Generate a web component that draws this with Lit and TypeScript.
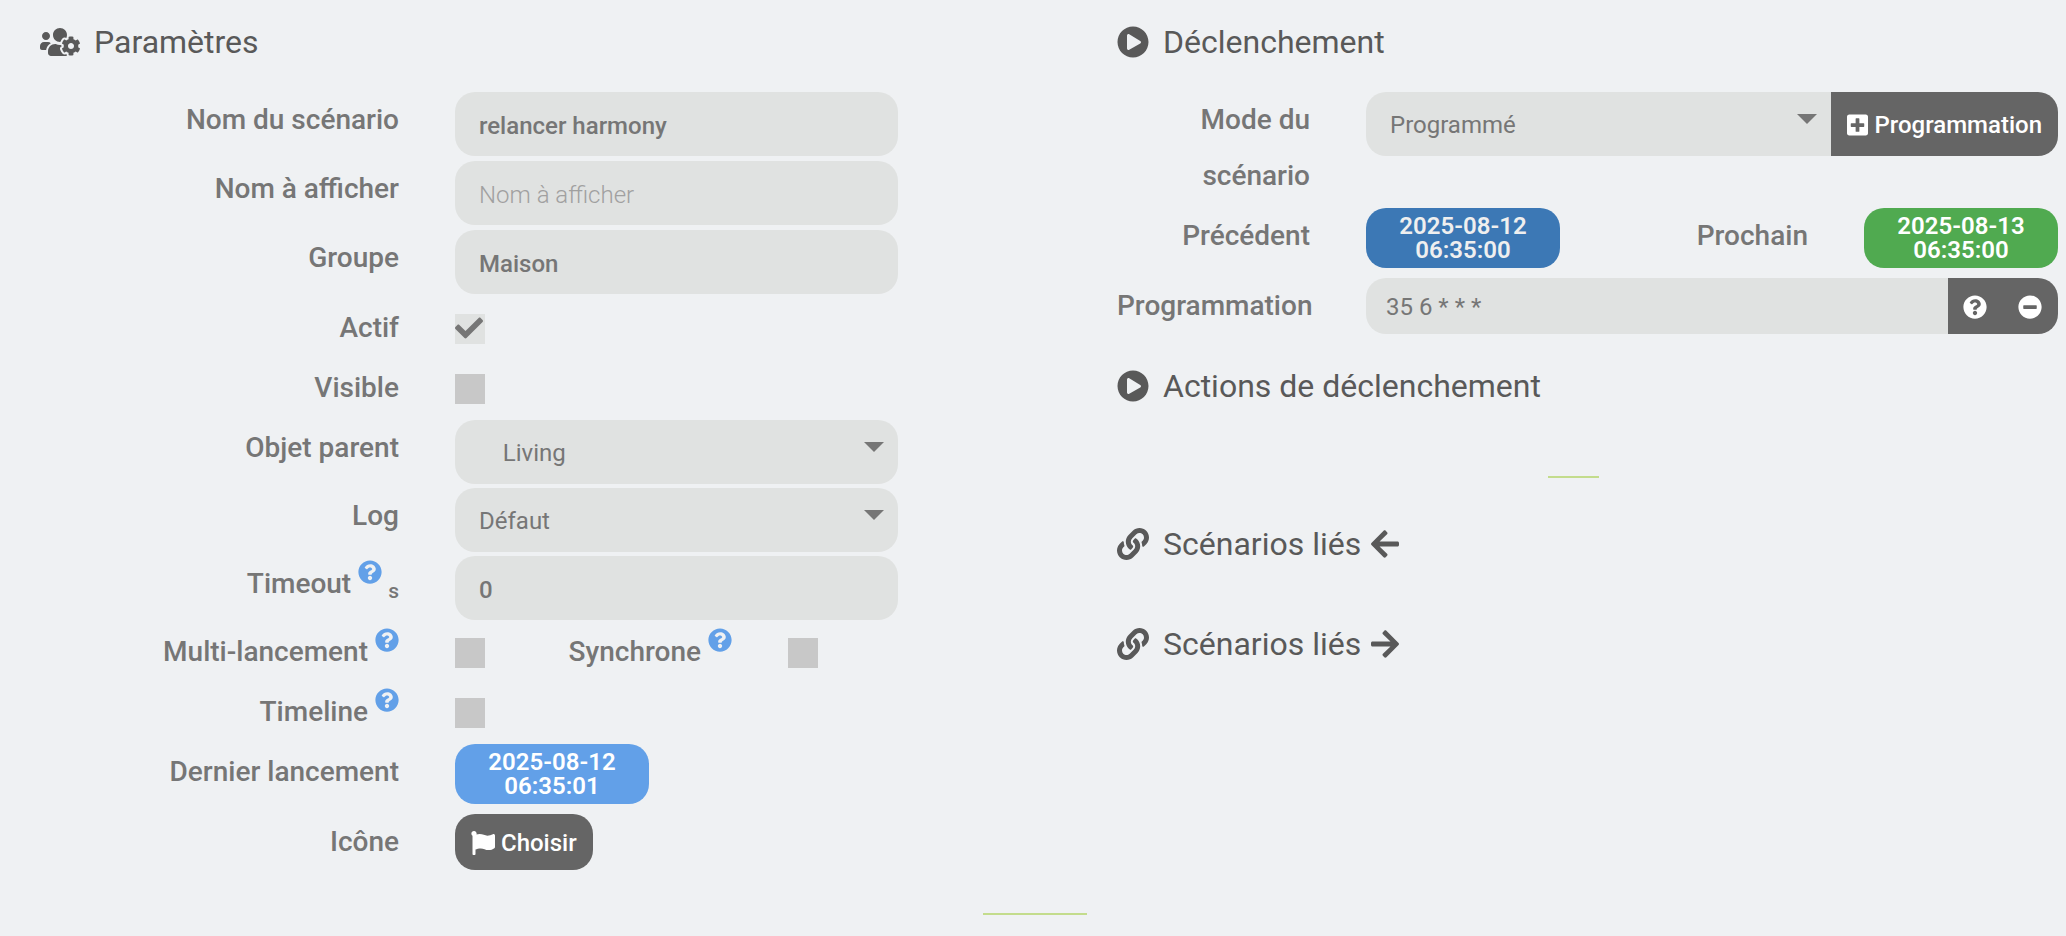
import { LitElement, html, css, svg, nothing } from "lit";
import { customElement } from "lit/decorators.js";

interface Glyph {
  w: number;
  d: string;
}

const glyphs: Record<string, Glyph> = {
  usersCog: {
    w: 640,
    d: "M610.5 341.3c2.6-14.1 2.6-28.5 0-42.6l25.8-14.9c3-1.7 4.3-5.2 3.3-8.5-6.7-21.6-18.2-41.2-33.2-57.4-2.3-2.5-6-3.1-9-1.4l-25.8 14.9c-10.9-9.3-23.4-16.5-36.9-21.3v-29.8c0-3.4-2.4-6.4-5.7-7.1-22.3-5-45-4.8-66.2 0-3.3.7-5.7 3.7-5.7 7.1v29.8c-13.5 4.8-26 12-36.9 21.3l-25.8-14.9c-2.9-1.7-6.7-1.1-9 1.4-15 16.2-26.5 35.8-33.2 57.4-1 3.3.4 6.8 3.3 8.5l25.8 14.9c-2.6 14.1-2.6 28.5 0 42.6l-25.8 14.9c-3 1.7-4.3 5.2-3.3 8.5 6.7 21.6 18.2 41.1 33.2 57.4 2.3 2.5 6 3.1 9 1.4l25.8-14.9c10.9 9.3 23.4 16.5 36.9 21.3v29.8c0 3.4 2.4 6.4 5.7 7.1 22.3 5 45 4.8 66.2 0 3.3-.7 5.7-3.7 5.7-7.1v-29.8c13.5-4.8 26-12 36.9-21.3l25.8 14.9c2.9 1.7 6.7 1.1 9-1.4 15-16.2 26.5-35.8 33.2-57.4 1-3.3-.4-6.8-3.3-8.5l-25.8-14.9zM496 368.5c-26.8 0-48.5-21.8-48.5-48.5s21.8-48.5 48.5-48.5 48.5 21.8 48.5 48.5-21.7 48.5-48.5 48.5zM96 224c35.3 0 64-28.7 64-64s-28.7-64-64-64-64 28.7-64 64 28.7 64 64 64zm224 32c1.9 0 3.7-.5 5.6-.6 8.3-21.7 20.5-42.1 36.3-59.2 7.4-8 17.9-12.6 28.9-12.6 6.9 0 13.7 1.8 19.6 5.3l7.9 4.6c.8-.5 1.6-.9 2.4-1.4 7-14.6 11.2-30.8 11.2-48 0-61.9-50.1-112-112-112S208 82.1 208 144c0 61.9 50.1 112 112 112zm105.2 194.5c-2.3-1.2-4.6-2.6-6.8-3.9-8.2 4.8-15.3 9.8-27.5 9.8-10.9 0-21.4-4.6-28.9-12.6-18.3-19.8-32.3-43.9-40.2-69.6-10.7-34.5 24.9-49.7 25.8-50.3-.1-2.6-.1-5.2 0-7.8l-7.9-4.6c-3.8-2.2-7-5-9.8-8.1-3.3.2-6.5.6-9.8.6-24.6 0-47.6-6-68.5-16h-8.3C179.6 288 128 339.6 128 403.2V432c0 26.5 21.5 48 48 48h255.4c-3.7-6-6.2-12.8-6.2-20.3v-9.2zM173.1 274.6C161.5 263.1 145.6 256 128 256H64c-35.3 0-64 28.7-64 64v32c0 17.7 14.3 32 32 32h65.9c6.3-47.4 34.9-87.3 75.2-109.4z",
  },
  play: {
    w: 512,
    d: "M256 8C119 8 8 119 8 256s111 248 248 248 248-111 248-248S393 8 256 8zm115.7 272l-176 101c-15.8 8.8-35.7-2.5-35.7-21V152c0-18.4 19.8-29.8 35.7-21l176 107c16.4 9.2 16.4 32.9 0 42z",
  },
  link: {
    w: 512,
    d: "M326.612 185.391c59.747 59.809 58.927 155.698.36 214.59-.11.12-.24.25-.36.37l-67.2 67.2c-59.27 59.27-155.699 59.262-214.96 0-59.27-59.26-59.27-155.7 0-214.96l37.106-37.106c9.84-9.84 26.786-3.3 27.294 10.606.648 17.722 3.826 35.527 9.69 52.721 1.986 5.822.567 12.262-3.783 16.612l-13.087 13.087c-28.026 28.026-28.905 73.66-1.155 101.96 28.024 28.579 74.086 28.749 102.325.51l67.2-67.19c28.191-28.191 28.073-73.757 0-101.83-3.701-3.694-7.429-6.564-10.341-8.569a16.037 16.037 0 0 1-6.947-12.606c-.396-10.567 3.348-21.456 11.698-29.806l21.054-21.055c5.521-5.521 14.182-6.199 20.584-1.731a152.482 152.482 0 0 1 20.522 17.197zM467.547 44.449c-59.261-59.262-155.69-59.27-214.96 0l-67.2 67.2c-.12.12-.25.25-.36.37-58.566 58.892-59.387 154.781.36 214.59a152.454 152.454 0 0 0 20.521 17.196c6.402 4.468 15.064 3.789 20.584-1.731l21.054-21.055c8.35-8.35 12.094-19.239 11.698-29.806a16.037 16.037 0 0 0-6.947-12.606c-2.912-2.005-6.64-4.875-10.341-8.569-28.073-28.073-28.191-73.639 0-101.83l67.2-67.19c28.239-28.239 74.3-28.069 102.325.51 27.75 28.3 26.872 73.934-1.155 101.96l-13.087 13.087c-4.35 4.35-5.769 10.79-3.783 16.612 5.864 17.194 9.042 34.999 9.69 52.721.509 13.906 17.454 20.446 27.294 10.606l37.106-37.106c59.271-59.259 59.271-155.699.001-214.959z",
  },
  arrowLeft: {
    w: 448,
    d: "M257.5 445.1l-22.2 22.2c-9.4 9.4-24.6 9.4-33.9 0L7 273c-9.4-9.4-9.4-24.6 0-33.9L201.4 44.7c9.4-9.4 24.6-9.4 33.9 0l22.2 22.2c9.5 9.5 9.3 25-.4 34.3L136.6 216H424c13.3 0 24 10.7 24 24v32c0 13.3-10.7 24-24 24H136.6l120.5 114.8c9.8 9.3 10 24.8.4 34.3z",
  },
  arrowRight: {
    w: 448,
    d: "M190.5 66.9l22.2-22.2c9.4-9.4 24.6-9.4 33.9 0L441 239c9.4 9.4 9.4 24.6 0 33.9L246.6 467.3c-9.4 9.4-24.6 9.4-33.9 0l-22.2-22.2c-9.5-9.5-9.3-25 .4-34.3L311.4 296H24c-13.3 0-24-10.7-24-24v-32c0-13.3 10.7-24 24-24h287.4L190.9 101.2c-9.8-9.3-10-24.8-.4-34.3z",
  },
  question: {
    w: 512,
    d: "M504 256c0 136.997-111.043 248-248 248S8 392.997 8 256C8 119.083 119.043 8 256 8s248 111.083 248 248zM262.655 90c-54.497 0-89.255 22.957-116.549 63.758-3.536 5.286-2.353 12.415 2.715 16.258l34.699 26.31c5.205 3.947 12.621 3.008 16.665-2.122 17.864-22.658 30.113-35.797 57.303-35.797 20.429 0 45.698 13.148 45.698 32.958 0 14.976-12.363 22.667-32.534 33.976C247.128 238.528 216 254.941 216 296v4c0 6.627 5.373 12 12 12h56c6.627 0 12-5.373 12-12v-1.333c0-28.462 83.186-29.647 83.186-106.667 0-58.002-60.165-102-116.531-102zM256 338c-25.365 0-46 20.635-46 46 0 25.364 20.635 46 46 46s46-20.636 46-46c0-25.365-20.635-46-46-46z",
  },
  minus: {
    w: 512,
    d: "M256 8C119 8 8 119 8 256s111 248 248 248 248-111 248-248S393 8 256 8zM124 296c-6.6 0-12-5.4-12-12v-56c0-6.6 5.4-12 12-12h264c6.6 0 12 5.4 12 12v56c0 6.6-5.4 12-12 12H124z",
  },
  plusSquare: {
    w: 448,
    d: "M400 32H48C21.5 32 0 53.5 0 80v352c0 26.5 21.5 48 48 48h352c26.5 0 48-21.5 48-48V80c0-26.5-21.5-48-48-48zm-32 252c0 6.6-5.4 12-12 12h-92v92c0 6.6-5.4 12-12 12h-56c-6.6 0-12-5.4-12-12v-92H92c-6.6 0-12-5.4-12-12v-56c0-6.6 5.4-12 12-12h92v-92c0-6.6 5.4-12 12-12h56c6.6 0 12 5.4 12 12v92h92c6.6 0 12 5.4 12 12v56z",
  },
  flag: {
    w: 512,
    d: "M349.565 98.783C295.978 98.783 251.721 64 184.348 64c-24.955 0-47.309 4.384-68.045 12.013a55.947 55.947 0 0 0 3.586-23.562C118.117 24.015 94.806 1.206 66.338.048 34.345-1.254 8 24.296 8 56c0 19.026 9.497 35.825 24 45.945V488c0 13.255 10.745 24 24 24h16c13.255 0 24-10.745 24-24v-94.4c28.311-12.064 63.582-22.122 114.435-22.122 53.588 0 97.844 34.783 165.217 34.783 48.169 0 86.667-16.294 122.505-40.858C506.84 359.452 512 349.571 512 339.045v-243.1c0-23.393-24.269-38.87-45.485-29.016-34.338 15.948-76.454 31.854-116.95 31.854z",
  },
  check: {
    w: 512,
    d: "M173.898 439.404l-166.4-166.4c-9.997-9.997-9.997-26.206 0-36.204l36.203-36.204c9.997-9.998 26.207-9.998 36.204 0L192 312.69 432.095 72.596c9.997-9.997 26.207-9.997 36.204 0l36.203 36.204c9.997 9.997 9.997 26.206 0 36.204l-294.4 294.401c-9.998 9.997-26.207 9.997-36.204-.001z",
  },
};

const icon = (name: string, cls = "icon") => {
  const g = glyphs[name];
  return html`<svg class=${cls} viewBox="0 0 ${g.w} 512" aria-hidden="true">${svg`<path d=${g.d}></path>`}</svg>`;
};

const help = (title: string) =>
  html`<sup class="help" title=${title}>${icon("question")}</sup>`;

@customElement("app-root")
export class AppRoot extends LitElement {
  static styles = css`
    :host {
      display: block;
      min-height: 100vh;
      background: #eff1f3;
      color: #767676;
      font-family: Roboto, "Liberation Sans", sans-serif;
      font-size: 24px;
    }
    * {
      box-sizing: border-box;
    }
    .icon {
      height: 1em;
      fill: currentColor;
      flex: none;
    }
    .page {
      display: grid;
      grid-template-columns: minmax(0, 1077fr) minmax(0, 941fr);
      padding: 16px 8px 0 40px;
    }
    .title {
      display: flex;
      align-items: center;
      height: 52px;
      margin: 0 0 24px;
      color: #595959;
      font-size: 32px;
      font-weight: 400;
      line-height: 52px;
    }
    .title .icon,
    .title .users {
      height: 32px;
      margin-right: 14px;
      fill: currentColor;
    }
    .title .arrow {
      height: 32px;
      margin-left: 10px;
      fill: currentColor;
    }
    .settings {
      padding-left: 55px;
    }
    .identity {
      display: grid;
      gap: 5px;
      margin-bottom: 6px;
    }
    .options {
      display: grid;
      gap: 4px;
    }
    .row {
      display: grid;
      grid-template-columns: minmax(0, 304fr) minmax(0, 443fr) minmax(0, 163fr);
      column-gap: 56px;
      min-height: 56px;
    }
    .row.stamped {
      min-height: 66px;
    }
    .label {
      font-size: 28px;
      font-weight: 500;
      line-height: 56px;
      text-align: right;
    }
    .nowrap {
      white-space: nowrap;
    }
    .help,
    .unit {
      display: inline-block;
      line-height: 0;
      vertical-align: baseline;
    }
    .help {
      margin-left: 7px;
      color: #62a0e8;
      font-size: 24px;
    }
    .help .icon {
      display: block;
      margin-bottom: 9px;
    }
    .unit {
      position: relative;
      top: 5px;
      margin-left: 6px;
      font-size: 21px;
    }
    .field {
      display: block;
      width: 100%;
      height: 64px;
      margin: 0;
      padding: 4px 24px 0;
      border: 0;
      border-radius: 20px;
      outline: 0;
      background: #e0e2e1;
      color: inherit;
      font: inherit;
      font-weight: 500;
      appearance: none;
    }
    .field::placeholder {
      color: #a0a0a0;
      font-weight: 300;
      opacity: 1;
    }
    .picker {
      position: relative;
      flex: 1;
      min-width: 0;
      height: 64px;
    }
    .picker .field {
      padding: 2px 24px 0;
      font-weight: 400;
    }
    .picker::after {
      content: "";
      position: absolute;
      top: 22px;
      right: 14px;
      border: 10px solid transparent;
      border-top-color: #767676;
      border-bottom: 0;
      pointer-events: none;
    }
    .tick {
      display: grid;
      width: 30px;
      height: 30px;
      margin-top: 14px;
    }
    .tick input {
      grid-area: 1 / 1;
      width: 30px;
      height: 30px;
      margin: 0;
      appearance: none;
      background: #c8c8c8;
    }
    .tick input:checked {
      background: #e0e2e1;
    }
    .tick .mark {
      grid-area: 1 / 1;
      width: 28px;
      height: 28px;
      fill: #767676;
      pointer-events: none;
    }
    .tick input:not(:checked) + .mark {
      display: none;
    }
    .pair {
      display: grid;
      grid-template-columns: 30px 1fr 110px;
      column-gap: 56px;
    }
    .stamp {
      display: block;
      width: 194px;
      max-width: 100%;
      height: 60px;
      padding: 6px 20px;
      border-radius: 20px;
      color: #fff;
      font-size: 24px;
      font-weight: 600;
      line-height: 24px;
      text-align: center;
    }
    .info {
      background: #62a0e8;
    }
    .primary {
      background: #3c78b5;
      color: #efefef;
    }
    .success {
      background: #50aa50;
    }
    .btn {
      display: inline-flex;
      align-items: center;
      gap: 6px;
      height: 56px;
      padding: 2px 16px 0;
      border: 0;
      border-radius: 20px;
      background: #656565;
      color: #fff;
      font: inherit;
      font-weight: 500;
      white-space: nowrap;
      cursor: pointer;
    }
    .group {
      display: flex;
    }
    .group .field {
      border-radius: 20px 0 0 20px;
    }
    .group .btn {
      height: auto;
      border-radius: 0;
    }
    .group .btn:last-child {
      border-radius: 0 20px 20px 0;
    }
    .cron .field {
      height: 56px;
      padding: 2px 20px 0;
      font-weight: 400;
    }
    .cron .btn {
      padding: 2px 16px 0 15px;
    }
    .trigger {
      display: grid;
      grid-template-columns: minmax(0, 193fr) minmax(0, 692fr);
      column-gap: 56px;
    }
    .trigger .label {
      min-width: 0;
    }
    .mode {
      padding-bottom: 4px;
    }
    .dates {
      display: grid;
      grid-template-columns: 194px 1fr 194px;
      column-gap: 56px;
      height: 70px;
    }
    .actions {
      margin-top: 26px;
    }
    .rule {
      width: 5%;
      height: 2px;
      margin: 0 auto;
      border: 0;
      background: #c3dc8c;
    }
    .divider {
      padding: 40px 28px 40px 0;
    }
    .side {
      width: 51px;
    }
    .divider + .title {
      margin-bottom: 48px;
    }
    .end {
      padding: 43px 0 0 4px;
    }
  `;

  private tick(id: string, checked = false) {
    return html`<span class="tick"
      ><input id=${id} type="checkbox" ?checked=${checked} />${icon("check", "mark")}</span
    >`;
  }

  private row(id: string, label: unknown, control: unknown, cls = "") {
    return html`<div class="row ${cls}">
      <label class="label" for=${id}>${label}</label>
      ${control}
    </div>`;
  }

  private text(id: string, value: string, placeholder = "") {
    return html`<input
      class="field"
      id=${id}
      type="text"
      .value=${value}
      placeholder=${placeholder || nothing}
    />`;
  }

  private select(id: string, value: string) {
    return html`<div class="picker">
      <select class="field" id=${id}>
        <option>${value}</option>
      </select>
    </div>`;
  }

  render() {
    return html`
      <main class="page">
        <section>
          <h1 class="title">${icon("usersCog", "users")}Paramètres</h1>
          <form class="settings">
            <div class="identity">
              ${this.row("name", "Nom du scénario", this.text("name", "relancer harmony"))}
              ${this.row("display", "Nom à afficher", this.text("display", "", "Nom à afficher"))}
              ${this.row("group", "Groupe", this.text("group", "Maison"))}
            </div>
            <div class="options">
              ${this.row("active", "Actif", this.tick("active", true))}
              ${this.row("visible", "Visible", this.tick("visible"))}
              ${this.row("parent", "Objet parent", this.select("parent", "\u00a0\u00a0\u00a0\u00a0Living"))}
              ${this.row("log", "Log", this.select("log", "Défaut"))}
              ${this.row(
                "timeout",
                html`Timeout${help("Durée maximale")}<sub class="unit">s</sub>`,
                this.text("timeout", "0")
              )}
              ${this.row(
                "multi",
                html`Multi-lancement${help("Lancements simultanés")}`,
                html`<div class="pair">
                  ${this.tick("multi")}
                  <label class="label nowrap" for="sync">Synchrone${help("Mode synchrone")}</label>
                  ${this.tick("sync")}
                </div>`
              )}
              ${this.row("timeline", html`Timeline${help("Suivi dans la timeline")}`, this.tick("timeline"))}
              ${this.row(
                "last",
                "Dernier lancement",
                html`<output class="stamp info" id="last">2025-08-12 06:35:01</output>`,
                "stamped"
              )}
              ${this.row(
                "choose",
                "Icône",
                html`<div>
                  <button class="btn" id="choose" type="button">${icon("flag")}Choisir</button>
                </div>`
              )}
            </div>
          </form>
        </section>

        <section>
          <h2 class="title">${icon("play")}Déclenchement</h2>
          <form class="trigger">
            <label class="label mode" for="mode">Mode du scénario</label>
            <div>
              <div class="group">
                ${this.select("mode", "Programmé")}
                <button class="btn" type="button">${icon("plusSquare")}Programmation</button>
              </div>
            </div>
            <label class="label" for="previous">Précédent</label>
            <div class="dates">
              <output class="stamp primary" id="previous">2025-08-12 06:35:00</output>
              <label class="label" for="next">Prochain</label>
              <output class="stamp success" id="next">2025-08-13 06:35:00</output>
            </div>
            <label class="label" for="cron">Programmation</label>
            <div class="group cron">
              ${this.text("cron", "35 6 * * *")}
              <button class="btn" type="button" aria-label="Aide">${icon("question")}</button>
              <button class="btn" type="button" aria-label="Supprimer">${icon("minus")}</button>
            </div>
          </form>
          <h2 class="title actions">${icon("play")}Actions de déclenchement</h2>
          <div class="divider"><hr class="rule side" /></div>
          <h2 class="title">${icon("link")}Scénarios liés${icon("arrowLeft", "arrow")}</h2>
          <h2 class="title">${icon("link")}Scénarios liés${icon("arrowRight", "arrow")}</h2>
        </section>
      </main>
      <div class="end"><hr class="rule" /></div>
    `;
  }
}
